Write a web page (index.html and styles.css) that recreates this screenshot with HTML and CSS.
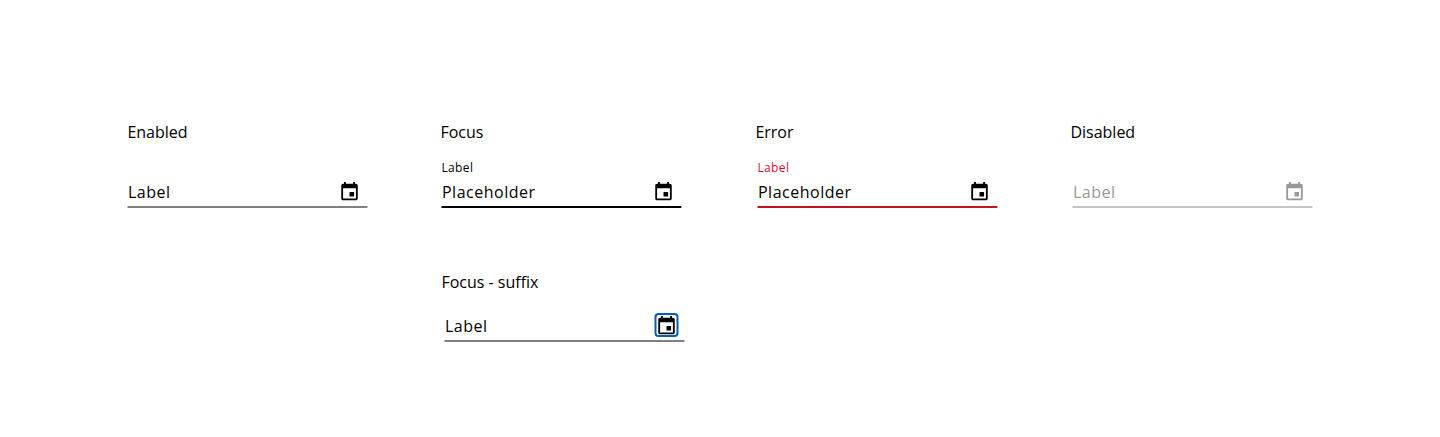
FILE: index.html
```html
<!DOCTYPE html>
<html lang="en">
<head>
<meta charset="utf-8">
<title>Date field states</title>
<link rel="stylesheet" href="styles.css">
</head>
<body>
<svg class="defs" width="0" height="0"><symbol id="cal" viewBox="0 0 24 24"><path d="M17 12h-5v5h5v-5zM16 1v2H8V1H6v2H5c-1.11 0-1.99.9-1.99 2L3 19c0 1.1.89 2 2 2h14c1.1 0 2-.9 2-2V5c0-1.1-.9-2-2-2h-1V1h-2zm3 18H5V8h14v11z"/></symbol></svg>
<main class="states">
  <section class="state enabled"><h2 class="title">Enabled</h2><div class="label"></div><div class="field"><span class="text">Label</span><svg class="icon"><use href="#cal"/></svg></div></section>
  <section class="state focus"><h2 class="title">Focus</h2><div class="label">Label</div><div class="field"><span class="text">Placeholder</span><svg class="icon"><use href="#cal"/></svg></div></section>
  <section class="state error"><h2 class="title">Error</h2><div class="label">Label</div><div class="field"><span class="text">Placeholder</span><svg class="icon"><use href="#cal"/></svg></div></section>
  <section class="state disabled"><h2 class="title">Disabled</h2><div class="label"></div><div class="field"><span class="text">Label</span><svg class="icon"><use href="#cal"/></svg></div></section>
  <section class="state suffix"><h2 class="title">Focus - suffix</h2><div class="field"><span class="text">Label</span><span class="ring"><svg class="icon"><use href="#cal"/></svg></span></div></section>
</main>
</body>
</html>
```
FILE: styles.css
```css
* { box-sizing: border-box; }
body { margin: 0; background: #fff; color: #000; font-family: "Open Sans", "Noto Sans", sans-serif; }
.defs { display: block; }
.states { display: grid; grid-template-columns: 313px 315px 315px 245px; grid-template-rows: 150px auto; padding: 120px 0 0 127.4px; }
.title { margin: 0; font-size: 16px; font-weight: 400; line-height: 24px; }
.label { height: 16px; margin-top: 16px; font-size: 12px; line-height: 16px; letter-spacing: 0.4px; }
.field {
  --line: #808080;
  --edge: color-mix(in srgb, var(--line) 50%, white);
  display: flex; align-items: center; justify-content: space-between;
  width: 240.5px; height: 32px; padding: 2px 7.4px 2px 0.6px;
  background: linear-gradient(90deg, var(--edge) 1px, var(--line) 1px calc(100% - 1px), var(--edge) calc(100% - 1px)) bottom / 100% 2px no-repeat;
}
.text { font-size: 16px; line-height: 24px; letter-spacing: 0.5px; }
.icon { display: block; width: 22px; height: 22px; fill: currentColor; transform: translateX(-0.5px); }
.focus .label, .focus .field { margin-left: 1px; }
.focus .field { --line: #000; }
.error .label, .error .field { margin-left: 2px; }
.error .label { color: #cc1236; }
.error .field { --line: #c8141e; }
.disabled .label, .disabled .field { margin-left: 2px; }
.disabled .field { color: #999; --line: #c4c4c4; }
.suffix { grid-column: 2; padding-left: 1px; }
.suffix .field { margin: 16px 0 0 3px; padding-right: 6.5px; }
.suffix .icon { margin: -1px; transform: none; }
.ring { display: flow-root; height: 24px; margin-top: -2px; padding-top: 1px; border: 2px solid #0b5cab; border-radius: 4px; transform: translateX(0.5px); }
```
